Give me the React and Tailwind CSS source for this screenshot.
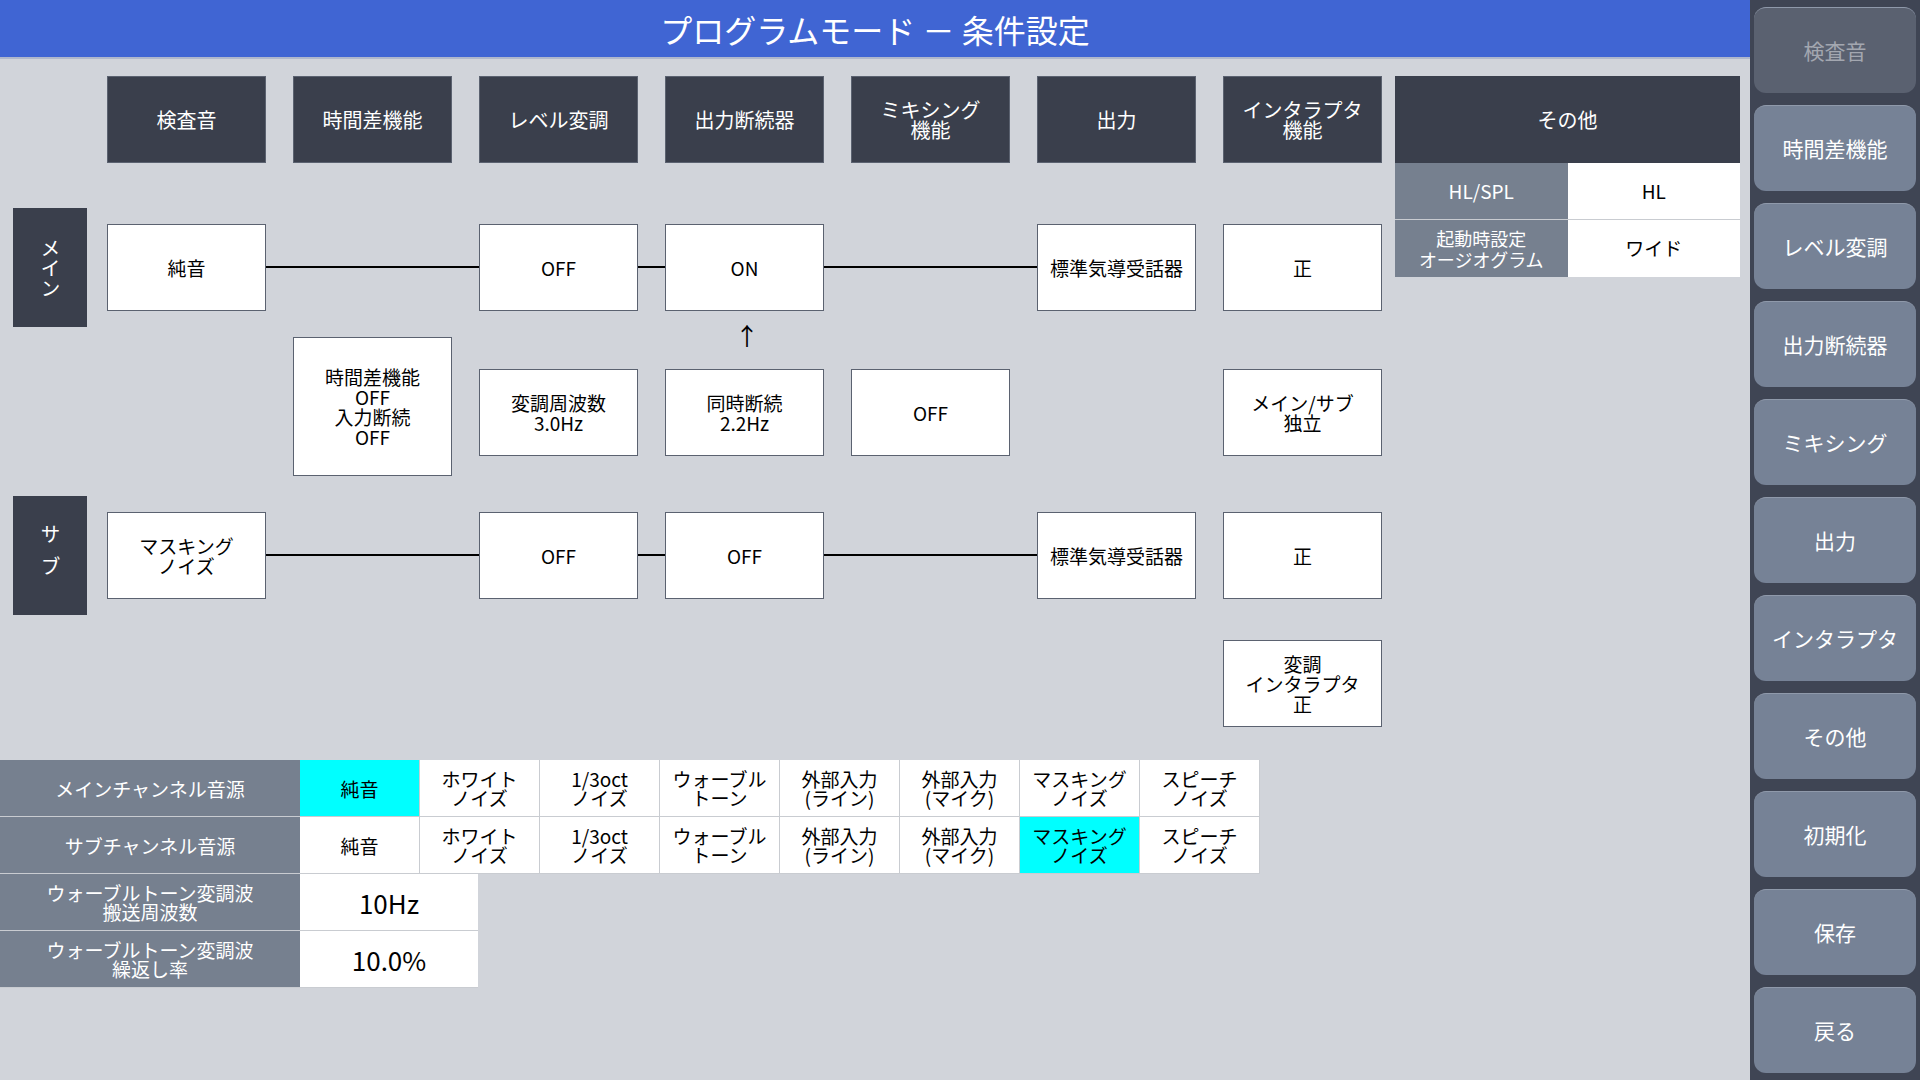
import React from "react";

const font = { fontFamily: '"Noto Sans CJK JP", "Noto Sans", sans-serif' };

const cols = ["検査音", "時間差機能", "レベル変調", "出力断続器", "ミキシング\n機能", "出力", "インタラプタ\n機能"];
const colX = [107, 293, 479, 665, 851, 1037, 1223];

const Box = ({ x, y, h = 87, children, dark }) => (
  <div
    className={`absolute w-[159px] flex items-center justify-center text-center whitespace-pre-line leading-[20px] border border-[#5b6270] ${dark ? "bg-[#3a3f4c] text-white text-[20px]" : "bg-white text-black text-[19px]"}`}
    style={{ left: x, top: y, height: h }}
  >
    {children}
  </div>
);

const Line = ({ x1, x2, y }) => (
  <div className="absolute h-[2px] bg-black" style={{ left: x1, top: y, width: x2 - x1 }} />
);

const Diagram = () => (
  <div className="relative h-[701px]">
    {cols.map((c, i) => (
      <Box key={c} x={colX[i]} y={17} dark>{c}</Box>
    ))}
    <div className="absolute left-[1395px] top-[17px] w-[345px] h-[87px] bg-[#3a3f4c] text-white text-[20px] flex items-center justify-center">その他</div>
    <div className="absolute left-[1395px] top-[104px] w-[345px] grid grid-cols-2 text-[19px]">
      <div className="h-[57px] bg-[#76808f] text-white flex items-center justify-center border-b border-[#c9ccd1]">HL/SPL</div>
      <div className="h-[57px] bg-white flex items-center justify-center border-b border-[#c9ccd1]">HL</div>
      <div className="h-[57px] bg-[#76808f] text-white flex flex-col items-center justify-center text-center text-[18px] leading-[21px]">
        <span>起動時設定</span>
        <span>オージオグラム</span>
      </div>
      <div className="h-[57px] bg-white flex items-center justify-center">ワイド</div>
    </div>

    <div className="absolute left-[13px] top-[149px] w-[74px] h-[119px] bg-[#3a3f4c] text-white text-[20px] flex items-center justify-center [writing-mode:vertical-rl]">メイン</div>
    <div className="absolute left-[13px] top-[437px] w-[74px] h-[119px] bg-[#3a3f4c] text-white text-[20px] flex items-center justify-center [writing-mode:vertical-rl] tracking-[12px]">サブ</div>

    <Line x1={266} x2={479} y={207} />
    <Line x1={638} x2={665} y={207} />
    <Line x1={824} x2={1037} y={207} />
    <Box x={107} y={165}>純音</Box>
    <Box x={479} y={165}>OFF</Box>
    <Box x={665} y={165}>ON</Box>
    <Box x={1037} y={165}>標準気導受話器</Box>
    <Box x={1223} y={165}>正</Box>

    <div className="absolute left-[735px] top-[264px] text-[24px] leading-none">↑</div>
    <Box x={293} y={278} h={139}>{"時間差機能\nOFF\n入力断続\nOFF"}</Box>
    <Box x={479} y={310}>{"変調周波数\n3.0Hz"}</Box>
    <Box x={665} y={310}>{"同時断続\n2.2Hz"}</Box>
    <Box x={851} y={310}>OFF</Box>
    <Box x={1223} y={310}>{"メイン/サブ\n独立"}</Box>

    <Line x1={266} x2={479} y={495} />
    <Line x1={638} x2={665} y={495} />
    <Line x1={824} x2={1037} y={495} />
    <Box x={107} y={453}>{"マスキング\nノイズ"}</Box>
    <Box x={479} y={453}>OFF</Box>
    <Box x={665} y={453}>OFF</Box>
    <Box x={1037} y={453}>標準気導受話器</Box>
    <Box x={1223} y={453}>正</Box>
    <Box x={1223} y={581}>{"変調\nインタラプタ\n正"}</Box>
  </div>
);

const sources = ["純音", "ホワイト\nノイズ", "1/3oct\nノイズ", "ウォーブル\nトーン", "外部入力\n(ライン)", "外部入力\n(マイク)", "マスキング\nノイズ", "スピーチ\nノイズ"];

const Label = ({ children }) => (
  <div className="w-[300px] h-[57px] bg-[#76808f] text-white text-[19px] leading-[19px] flex items-center justify-center text-center whitespace-pre-line border-b border-[#c9ccd1]">
    {children}
  </div>
);

const SourceRow = ({ label, sel }) => (
  <div className="flex">
    <Label>{label}</Label>
    {sources.map((s, i) => (
      <div
        key={s}
        className={`w-[120px] h-[57px] flex items-center justify-center text-center whitespace-pre-line text-[19px] leading-[19px] border-r border-b border-[#c9ccd1] ${i === sel ? "bg-[#00ffff]" : "bg-white"}`}
      >
        {s}
      </div>
    ))}
  </div>
);

const side = ["検査音", "時間差機能", "レベル変調", "出力断続器", "ミキシング", "出力", "インタラプタ", "その他", "初期化", "保存", "戻る"];

export default function App() {
  return (
    <div className="flex w-[1920px] h-[1080px] bg-[#d1d4da] overflow-hidden" style={font}>
      <div className="w-[1750px] flex flex-col">
        <div className="h-[59px] bg-[#4065d3] text-white text-[32px] flex items-center justify-center border-b-2 border-[#b0b8cc]">
          プログラムモード － 条件設定
        </div>
        <Diagram />
        <div className="flex flex-col">
          <SourceRow label="メインチャンネル音源" sel={0} />
          <SourceRow label="サブチャンネル音源" sel={6} />
          <div className="flex">
            <Label>{"ウォーブルトーン変調波\n搬送周波数"}</Label>
            <div className="w-[178px] h-[57px] bg-white text-[26px] flex items-center justify-center border-b border-[#c9ccd1]">10Hz</div>
          </div>
          <div className="flex">
            <Label>{"ウォーブルトーン変調波\n繰返し率"}</Label>
            <div className="w-[178px] h-[57px] bg-white text-[26px] flex items-center justify-center border-b border-[#c9ccd1]">10.0%</div>
          </div>
        </div>
      </div>
      <div className="w-[170px] bg-[#3f4554] flex flex-col gap-[12px] px-[4px] pt-[7px]">
        {side.map((s, i) => (
          <div
            key={s}
            className={`h-[86px] rounded-[12px] flex items-center justify-center text-[21px] border-t border-[#8f99aa] ${i === 0 ? "bg-[#5a6170] text-[#a3a7b0]" : "bg-[#768296] text-white"}`}
          >
            {s}
          </div>
        ))}
      </div>
    </div>
  );
}
